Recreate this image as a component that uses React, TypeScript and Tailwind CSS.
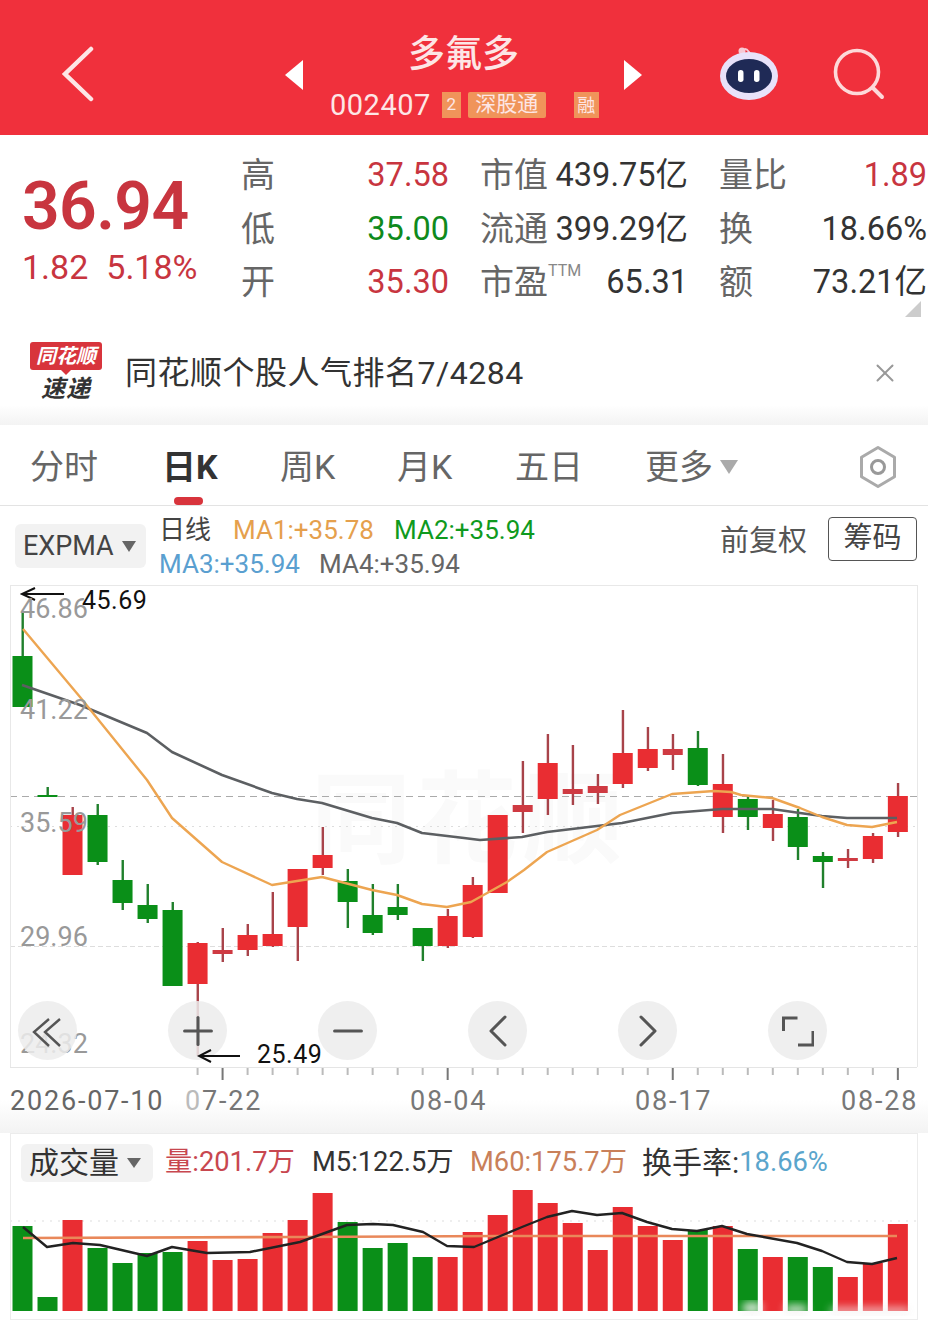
import { ChevronLeft, ChevronRight, Minus, Plus, X } from 'lucide-react'

const FONT = 'font-["Roboto","Noto_Sans_CJK_SC",sans-serif]'

// [wick top, body top, body bottom, wick bottom, up?]
const candles: [number, number, number, number, boolean][] = [
  [612, 656, 707, 707, false],
  [787, 795, 797, 797, false],
  [807, 815, 875, 875, true],
  [804, 815, 862, 865, false],
  [860, 880, 903, 910, false],
  [884, 905, 919, 923, false],
  [902, 910, 986, 986, false],
  [942, 943, 984, 1056, true],
  [928, 950, 954, 962, true],
  [924, 935, 950, 956, true],
  [892, 934, 946, 947, true],
  [869, 869, 927, 961, true],
  [827, 855, 868, 875, true],
  [869, 881, 902, 928, false],
  [884, 915, 933, 935, false],
  [884, 907, 915, 920, false],
  [928, 928, 946, 961, false],
  [909, 916, 946, 948, true],
  [877, 885, 937, 938, true],
  [815, 815, 893, 893, true],
  [761, 805, 812, 833, true],
  [734, 763, 799, 815, true],
  [745, 789, 794, 805, true],
  [774, 786, 793, 804, true],
  [710, 753, 784, 788, true],
  [727, 749, 768, 771, true],
  [734, 749, 755, 770, true],
  [731, 748, 785, 786, false],
  [754, 784, 817, 833, true],
  [796, 799, 817, 830, false],
  [800, 814, 828, 841, true],
  [809, 817, 847, 860, false],
  [852, 856, 862, 888, false],
  [849, 858, 861, 868, true],
  [833, 836, 859, 863, true],
  [783, 796, 832, 837, true],
]

const volumes = [
  1226, 1297, 1220, 1248, 1263, 1253, 1252, 1241, 1260, 1259, 1233, 1220, 1193, 1222, 1248, 1243, 1257, 1257,
  1232, 1215, 1185, 1203, 1223, 1250, 1207, 1226, 1240, 1230, 1226, 1249, 1257, 1257, 1267, 1277, 1263, 1224,
]
const volumeUp = [
  false, false, true, false, false, false, false, true, true, true, true, true, true, false, false, false, false,
  true, true, true, true, true, true, true, true, true, true, false, true, false, true, false, false, true, true, true,
]

const maOrange =
  '23,629 80,697 147,780 172,818 222,862 272,885 322,877 372,890 397,895 422,904 447,907 471,902 507,882 524,870 547,852 597,830 620,815 672,794 714,791 731,792 741,795 772,798 800,808 822,817 847,825 872,827 897,822'
const maGrey =
  '22,685 80,705 147,733 172,752 222,775 272,793 297,799 322,803 372,818 397,823 422,833 464,838 480,840 522,837 547,832 597,826 622,823 672,813 722,809 772,809 800,813 822,816 847,818 897,818'
const volBlack =
  '23,1227 47,1247 73,1243 100,1245 147,1256 172,1247 207,1253 250,1252 300,1242 347,1225 373,1224 393,1225 423,1232 447,1246 474,1247 522,1227 547,1217 572,1211 597,1215 622,1213 647,1222 672,1229 697,1231 722,1226 747,1234 797,1243 822,1251 847,1262 872,1264 897,1258'

const centerX = (i: number) => 22.5 + 25.01 * i

const axisLabels = [
  { text: '46.86', y: 'top-[5px]' },
  { text: '41.22', y: 'top-[106px]' },
  { text: '35.59', y: 'top-[219px]' },
  { text: '29.96', y: 'top-[333px]' },
  { text: '24.32', y: 'top-[440px]' },
]

const quoteRows = [
  [
    { label: '高', value: '37.58', color: 'text-[#c8353f]' },
    { label: '市值', value: '439.75亿', color: 'text-[#333]' },
    { label: '量比', value: '1.89', color: 'text-[#c8353f]' },
  ],
  [
    { label: '低', value: '35.00', color: 'text-[#0f8a1c]' },
    { label: '流通', value: '399.29亿', color: 'text-[#333]' },
    { label: '换', value: '18.66%', color: 'text-[#333]' },
  ],
  [
    { label: '开', value: '35.30', color: 'text-[#c8353f]' },
    { label: '市盈', sup: 'TTM', value: '65.31', color: 'text-[#333]' },
    { label: '额', value: '73.21亿', color: 'text-[#333]' },
  ],
]

function Header() {
  return (
    <header className="flex h-[135px] bg-[#f0303c] text-[#fde6e6]">
      <svg width="40" height="58" viewBox="0 0 40 58" className="ml-[58px] mt-[44px]">
        <path d="M33 5 7 30l26 25" fill="none" stroke="#fde6e6" strokeWidth="4.5" strokeLinecap="round" />
      </svg>
      <svg width="18" height="30" viewBox="0 0 18 30" className="ml-[187px] mt-[60px]">
        <path d="M18 0v30L0 15z" fill="#fff" />
      </svg>
      <div className="flex w-[321px] flex-col">
        <div className="mt-[32px] text-center text-[37px] font-medium leading-[46px]">多氟多</div>
        <div className="mt-[12px] flex items-center pl-[27px]">
          <span className="text-[29px] leading-[30px] tracking-[0.5px]">002407</span>
          <span className="ml-[11px] flex h-[26px] w-[19px] items-center justify-center bg-[#f0945a] text-[17px]">2</span>
          <span className="ml-[7px] flex h-[26px] w-[78px] items-center justify-center rounded-[2px] bg-[#f0945a] text-[21px]">
            深股通
          </span>
          <span className="ml-[28px] flex h-[26px] w-[25px] items-center justify-center bg-[#f0945a] text-[18px]">融</span>
        </div>
      </div>
      <svg width="18" height="30" viewBox="0 0 18 30" className="mt-[60px]">
        <path d="M0 0v30l18-15z" fill="#fff" />
      </svg>
      <svg width="64" height="60" viewBox="0 0 64 60" className="ml-[75px] mt-[45px]">
        <path d="M26 8c0-5 3-5 6-1l1 6" fill="none" stroke="#f7c9d4" strokeWidth="2" />
        <circle cx="25" cy="6" r="3.5" fill="#f7c9d4" />
        <ellipse cx="32" cy="31" rx="29" ry="24" fill="#e8e2fa" />
        <ellipse cx="32" cy="31" rx="23" ry="17" fill="#1f2a56" />
        <rect x="21" y="25" width="5.5" height="12" rx="2.7" fill="#fff" />
        <rect x="37" y="25" width="5.5" height="12" rx="2.7" fill="#fff" />
      </svg>
      <svg width="54" height="54" viewBox="0 0 54 54" className="ml-[52px] mt-[47px]">
        <circle cx="24" cy="25" r="21.5" fill="none" stroke="#fdd9d9" strokeWidth="3.6" />
        <path d="M40 41l9 9" stroke="#fdd9d9" strokeWidth="4" strokeLinecap="round" />
      </svg>
    </header>
  )
}

function Quote() {
  return (
    <section className="flex h-[205px] bg-white">
      <div className="w-[241px] pl-[22px] pt-[36px] text-[#c8353f]">
        <div className="text-[66px] font-semibold leading-[72px] tracking-[-0.6px]">36.94</div>
        <div className="mt-[4px] flex gap-[18px] text-[34px] leading-[40px]">
          <span>1.82</span>
          <span>5.18%</span>
        </div>
      </div>
      <div className="relative flex flex-1 flex-col pt-[14px]">
        {quoteRows.map((row, i) => (
          <div key={i} className="grid h-[53.5px] grid-cols-[208px_208px_208px] items-center gap-x-[31px]">
            {row.map((cell) => (
              <div key={cell.label} className="flex items-center justify-between whitespace-nowrap">
                <span className="flex items-start text-[34px] text-[#666]">
                  {cell.label}
                  {cell.sup && <span className="mt-[5px] text-[16px] leading-[18px] text-[#888]">{cell.sup}</span>}
                </span>
                <span className={`text-[32.5px] ${cell.color}`}>{cell.value}</span>
              </div>
            ))}
          </div>
        ))}
        <svg width="16" height="16" viewBox="0 0 16 16" className="absolute bottom-[23px] right-[7px]">
          <path d="M16 0v16H0z" fill="#ccc" />
        </svg>
      </div>
    </section>
  )
}

function Banner() {
  return (
    <section className="flex h-[65px] items-center bg-white pl-[30px] pr-[28px]">
      <div className="flex w-[72px] flex-col items-center">
        <div className="relative flex h-[28px] w-[72px] items-center justify-center rounded-[3px] bg-[#d8343c] text-[20px] font-bold italic leading-none text-white">
          同花顺
          <span className="absolute bottom-[-5px] left-[30px] h-0 w-0 border-x-[6px] border-t-[6px] border-x-transparent border-t-[#d8343c]" />
        </div>
        <div className="mt-[5px] text-[24px] font-bold italic leading-[28px] tracking-[1px] text-[#333]">速递</div>
      </div>
      <span className="ml-[23px] text-[32px] tracking-[0.5px] text-[#333]">同花顺个股人气排名7/4284</span>
      <X className="ml-auto h-[30px] w-[30px] text-[#999]" strokeWidth={1.6} />
    </section>
  )
}

function Tabs() {
  const tabs = [
    { label: '分时', w: 'w-[132px]' },
    { label: '日K', w: 'w-[118px]', active: true },
    { label: '周K', w: 'w-[117px]' },
    { label: '月K', w: 'w-[118px]' },
    { label: '五日', w: 'w-[130px]' },
  ]
  return (
    <nav className="flex h-[81px] items-center border-b border-[#e3e3e3] bg-white pl-[30px] pt-[4px] text-[34px] text-[#666]">
      {tabs.map((t) => (
        <div key={t.label} className={`relative ${t.w}`}>
          <span className={t.active ? 'font-bold text-[#333]' : ''}>{t.label}</span>
          {t.active && <span className="absolute left-[12px] top-[55px] h-[8px] w-[29px] rounded-full bg-[#d8343c]" />}
        </div>
      ))}
      <span>更多</span>
      <svg width="18" height="14" viewBox="0 0 18 14" className="ml-[7px]">
        <path d="M0 0h18L9 14z" fill="#aaa" />
      </svg>
      <svg width="40" height="44" viewBox="0 0 40 44" className="ml-[120px]">
        <path d="M20 2.5l16.5 9.7v19.6L20 41.5 3.5 31.8V12.2z" fill="none" stroke="#aaa" strokeWidth="3" strokeLinejoin="round" />
        <circle cx="20" cy="22" r="6.5" fill="none" stroke="#999" strokeWidth="3" />
      </svg>
    </nav>
  )
}

function Legend() {
  return (
    <section className="flex h-[79px] bg-white">
      <div className="ml-[15px] mt-[18px] flex h-[44px] w-[131px] items-center rounded-[6px] bg-[#f2f2f2] pl-[8px] text-[27px] text-[#444]">
        EXPMA
        <svg width="14" height="11" viewBox="0 0 14 11" className="ml-[8px]">
          <path d="M0 0h14L7 11z" fill="#666" />
        </svg>
      </div>
      <div className="ml-[13px] flex flex-col pt-[7px] text-[26px] leading-[34px]">
        <div className="flex">
          <span className="w-[74px] text-[#444]">日线</span>
          <span className="w-[161px] text-[#e5a04d]">MA1:+35.78</span>
          <span className="text-[#0f9a1e]">MA2:+35.94</span>
        </div>
        <div className="flex">
          <span className="w-[160px] text-[#5a9fd0]">MA3:+35.94</span>
          <span className="text-[#666]">MA4:+35.94</span>
        </div>
      </div>
      <div className="ml-auto mr-[11px] mt-[11px] flex h-[44px] items-center">
        <span className="relative top-[3px] text-[29px] text-[#555]">前复权</span>
        <span className="ml-[21px] flex h-[44px] w-[89px] items-center justify-center rounded-[4px] border border-[#555] text-[29px] text-[#444]">
          筹码
        </span>
      </div>
    </section>
  )
}

function PriceArrow({ x, y }: { x: number; y: number }) {
  return (
    <path
      d={`M${x + 42} ${y}H${x}M${x + 13} ${y - 6}L${x} ${y}l13 6`}
      fill="none"
      stroke="#111"
      strokeWidth="2"
    />
  )
}

function KChart() {
  const buttons = [
    <svg key="a" width="40" height="40" viewBox="0 0 40 40">
      <path d="M21 8 6 21l15 14M32 8 17 21l15 14" fill="none" stroke="currentColor" strokeWidth="2.4" />
    </svg>,
    <Plus key="b" className="h-[46px] w-[46px]" strokeWidth={1.6} />,
    <Minus key="c" className="h-[46px] w-[46px]" strokeWidth={1.6} />,
    <ChevronLeft key="d" className="h-[56px] w-[56px]" strokeWidth={1.3} />,
    <ChevronRight key="e" className="h-[56px] w-[56px]" strokeWidth={1.3} />,
    <svg key="f" width="32" height="32" viewBox="0 0 32 32">
      <path d="M1.5 16V3h14M31 16v14H16" fill="none" stroke="currentColor" strokeWidth="3" />
    </svg>,
  ]
  return (
    <section className="relative mx-[10px] h-[482px] w-[908px] border-x border-t border-[#e8e8e8] bg-white">
      <div className="absolute left-[300px] top-[185px] text-[100px] font-bold leading-none tracking-[6px] text-[#fafafa]">
        同花顺
      </div>
      <svg width="906" height="481" viewBox="11 586 906 481" className="relative block">
        <path d="M10 796.5H917" stroke="#aaa" strokeWidth="1" strokeDasharray="7 5" />
        <path d="M10 826.5H917" stroke="#ddd" strokeWidth="1" strokeDasharray="2 5" />
        <path d="M10 946.5H917" stroke="#ddd" strokeWidth="1" strokeDasharray="5 3" />
        {candles.map(([top, bodyTop, bodyBottom, bottom, up], i) => {
          const x = centerX(i)
          const thin = bodyBottom - bodyTop < 8
          return (
            <g key={i}>
              <rect x={x - 1} y={top} width="2.4" height={bottom - top} fill={up ? '#a8434a' : '#20802c'} />
              <rect
                x={x - 10}
                y={bodyTop}
                width="20"
                height={bodyBottom - bodyTop}
                fill={up ? (thin ? '#cf3a42' : '#e92d32') : '#0a8f18'}
              />
            </g>
          )
        })}
        <polyline points={maGrey} fill="none" stroke="#5c5f62" strokeWidth="2.6" strokeLinejoin="round" />
        <polyline points={maOrange} fill="none" stroke="#eda551" strokeWidth="2.4" strokeLinejoin="round" />
        <PriceArrow x={22} y={594} />
      </svg>
      {axisLabels.map((l) => (
        <span key={l.text} className={`absolute left-[9px] text-[27px] leading-[36px] text-[#999] ${l.y}`}>
          {l.text}
        </span>
      ))}
      <span className="absolute left-[71px] top-0 text-[25px] leading-[30px] tracking-[0.5px] text-[#111]">45.69</span>
      <div className="absolute left-[7px] top-[415px] flex gap-[91px]">
        {buttons.map((icon, i) => (
          <div
            key={i}
            className="flex h-[59px] w-[59px] items-center justify-center rounded-full bg-[#ececec]/85 text-[#555]"
          >
            {icon}
          </div>
        ))}
      </div>
      <svg width="44" height="14" viewBox="0 0 44 14" className="absolute left-[186px] top-[463px]">
        <path d="M43 7H2M14 1 2 7l12 6" fill="none" stroke="#111" strokeWidth="2" />
      </svg>
      <span className="absolute left-[246px] top-[453px] text-[25px] leading-[32px] tracking-[0.5px] text-[#111]">25.49</span>
    </section>
  )
}

function DateAxis() {
  return (
    <section className="h-[66px] bg-gradient-to-b from-white via-white to-[#f3f3f3]">
      <svg width="928" height="14" viewBox="0 0 928 14" className="block">
        <path d="M10 .5H917" stroke="#e5e5e5" />
        {candles.map((_, i) => {
          const major = i === 8 || i === 17 || i === 26 || i === 35
          const x = centerX(i)
          if (i < 7) return null
          return (
            <rect
              key={i}
              x={x - 1}
              y="1"
              width="2"
              height={major ? 12 : 7}
              fill={major ? '#777' : '#bbb'}
            />
          )
        })}
      </svg>
      <div className="mt-[3px] grid grid-cols-[175px_225px_225px_206px_76px] whitespace-nowrap pl-[10px] text-[27px] leading-[34px] tracking-[1.8px] text-[#777]">
        <span className="text-[#666]">2026-07-10</span>
        <span>
          <span className="text-[#bbb]">0</span>7-22
        </span>
        <span>08-04</span>
        <span>08-17</span>
        <span>08-28</span>
      </div>
    </section>
  )
}

function VolumePanel() {
  return (
    <section className="relative mx-[10px] h-[187px] w-[908px] border-x border-y border-[#ececec] bg-white">
      <div className="flex h-[57px] items-center whitespace-nowrap pl-[10px] text-[27.3px]">
        <div className="flex h-[38px] w-[132px] items-center rounded-[6px] bg-[#f2f2f2] pl-[8px] text-[30px] text-[#333]">
          成交量
          <svg width="14" height="10" viewBox="0 0 14 10" className="ml-[8px]">
            <path d="M0 0h14L7 10z" fill="#666" />
          </svg>
        </div>
        <span className="ml-[12px] w-[147px] text-[#c8474f]">量:201.7万</span>
        <span className="w-[158px] text-[#333]">M5:122.5万</span>
        <span className="w-[172px] text-[#c9805a]">M60:175.7万</span>
        <span className="text-[30px] leading-none text-[#333]">换手率:</span>
        <span className="text-[#5aa5cc]">18.66%</span>
      </div>
      <svg width="906" height="130" viewBox="11 1190 906 130" className="absolute left-0 top-[56px] block">
        <defs>
          <filter id="wm">
            <feGaussianBlur stdDeviation="4" />
          </filter>
        </defs>
        <path d="M10 1221H917" stroke="#ddd" strokeDasharray="2 6" />
        {volumes.map((top, i) => (
          <rect
            key={i}
            x={centerX(i) - 10}
            y={top}
            width="20"
            height={1311 - top}
            fill={volumeUp[i] ? '#e92d32' : '#0a8f18'}
          />
        ))}
        <polyline points="23,1238 300,1237 500,1236 700,1236 897,1236" fill="none" stroke="#e9885a" strokeWidth="2.6" />
        <polyline points={volBlack} fill="none" stroke="#222" strokeWidth="2.4" strokeLinejoin="round" />
        <g filter="url(#wm)" fill="#f4f2f2" opacity="0.85">
          <rect x="742" y="1302" width="20" height="12" rx="6" />
          <rect x="785" y="1305" width="22" height="9" rx="4" />
          <rect x="830" y="1308" width="80" height="6" rx="3" />
        </g>
      </svg>
    </section>
  )
}

export default function App() {
  return (
    <div className={`h-[1328px] w-[928px] overflow-hidden bg-white ${FONT}`}>
      <Header />
      <Quote />
      <Banner />
      <div className="h-[20px] bg-gradient-to-b from-white to-[#f3f3f3]" />
      <Tabs />
      <Legend />
      <KChart />
      <DateAxis />
      <VolumePanel />
    </div>
  )
}
